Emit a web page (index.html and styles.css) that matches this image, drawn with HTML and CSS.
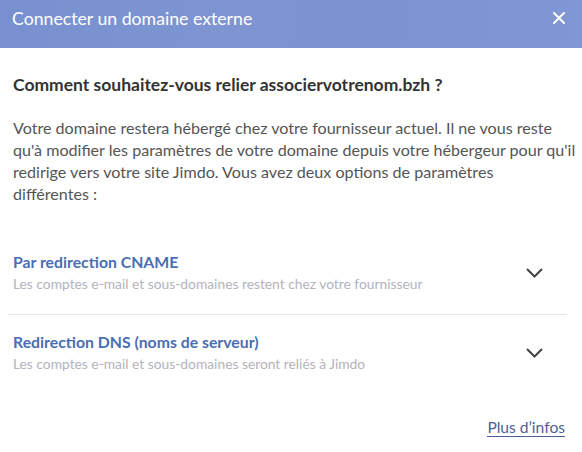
FILE: index.html
```html
<!DOCTYPE html>
<html lang="fr">
<head>
<meta charset="utf-8">
<link rel="stylesheet" href="styles.css">
</head>
<body>
<div class="modal">
  <header class="modal-header">
    <h1 class="modal-title">Connecter un domaine externe</h1>
    <button class="close" aria-label="Fermer">
      <svg width="12" height="12" viewBox="0 0 12 12"><path d="M1 1L11 11M11 1L1 11" stroke="#fff" stroke-width="2" stroke-linecap="round"/></svg>
    </button>
  </header>
  <main class="modal-body">
    <h2 class="question">Comment souhaitez-vous relier associervotrenom.bzh&nbsp;?</h2>
    <p class="intro">Votre domaine restera hébergé chez votre fournisseur actuel. Il ne vous reste qu'à modifier les paramètres de votre domaine depuis votre hébergeur pour qu'il redirige vers votre site Jimdo. Vous avez deux options de paramètres différentes&nbsp;:</p>
    <ul class="options">
      <li class="option">
        <div class="option-text">
          <div class="option-title">Par redirection CNAME</div>
          <div class="option-sub">Les comptes e-mail et sous-domaines restent chez votre fournisseur</div>
        </div>
        <svg class="chevron" width="17" height="10" viewBox="0 0 17 10"><path d="M1 1L8.5 8.5L16 1" fill="none" stroke="#444" stroke-width="2"/></svg>
      </li>
      <li class="option">
        <div class="option-text">
          <div class="option-title">Redirection DNS (noms de serveur)</div>
          <div class="option-sub">Les comptes e-mail et sous-domaines seront reliés à Jimdo</div>
        </div>
        <svg class="chevron" width="17" height="10" viewBox="0 0 17 10"><path d="M1 1L8.5 8.5L16 1" fill="none" stroke="#444" stroke-width="2"/></svg>
      </li>
    </ul>
    <div class="more"><a href="#" class="more-link">Plus d’infos</a></div>
  </main>
</div>
</body>
</html>
```
FILE: styles.css
```css
* { box-sizing: border-box; }
html, body { margin: 0; padding: 0; background: #fff; }
body { font-family: Lato, "Open Sans", sans-serif; width: 582px; height: 452px; overflow: hidden; }
.modal-header {
  height: 48px;
  background: linear-gradient(100deg, #7990d0 0%, #7e95d2 40%, #7b93cf 60%, #8097d3 100%);
  display: flex;
  align-items: flex-start;
  justify-content: space-between;
  padding: 7px 17px 0 12px;
}
.modal-title { margin: 0; font-size: 17.7px; font-weight: 400; color: #fff; line-height: 24px; }
.close { background: none; border: 0; padding: 0; display: flex; margin-top: 5px; }
.modal-body { padding: 26px 15px 0 13px; }
.question { margin: 0; font-size: 17.5px; font-weight: 700; color: #333; line-height: 22px; }
.intro { margin: 21px -10px 0 0; font-size: 16.1px; line-height: 22px; color: #555; }
.options { list-style: none; margin: 47px 0 0 -5px; padding: 0; }
.option { display: flex; align-items: center; justify-content: space-between; padding: 0 24px 0 5px; }
.option:first-child { padding-bottom: 20px; border-bottom: 1px solid #e6e6e6; }
.option:last-child { padding-top: 17px; }
.option-title { font-size: 15.8px; font-weight: 700; color: #4b6db3; line-height: 20px; }
.option-sub { font-size: 13.8px; color: #b3b3bb; line-height: 20px; margin-top: 2px; }
.chevron { display: block; }
.more { display: flex; justify-content: flex-end; margin-top: 44px; padding-right: 2px; }
.more-link { font-size: 15.6px; color: #4e5f96; text-decoration: none; border-bottom: 1px solid #4e5f96; line-height: 18px; }
```
